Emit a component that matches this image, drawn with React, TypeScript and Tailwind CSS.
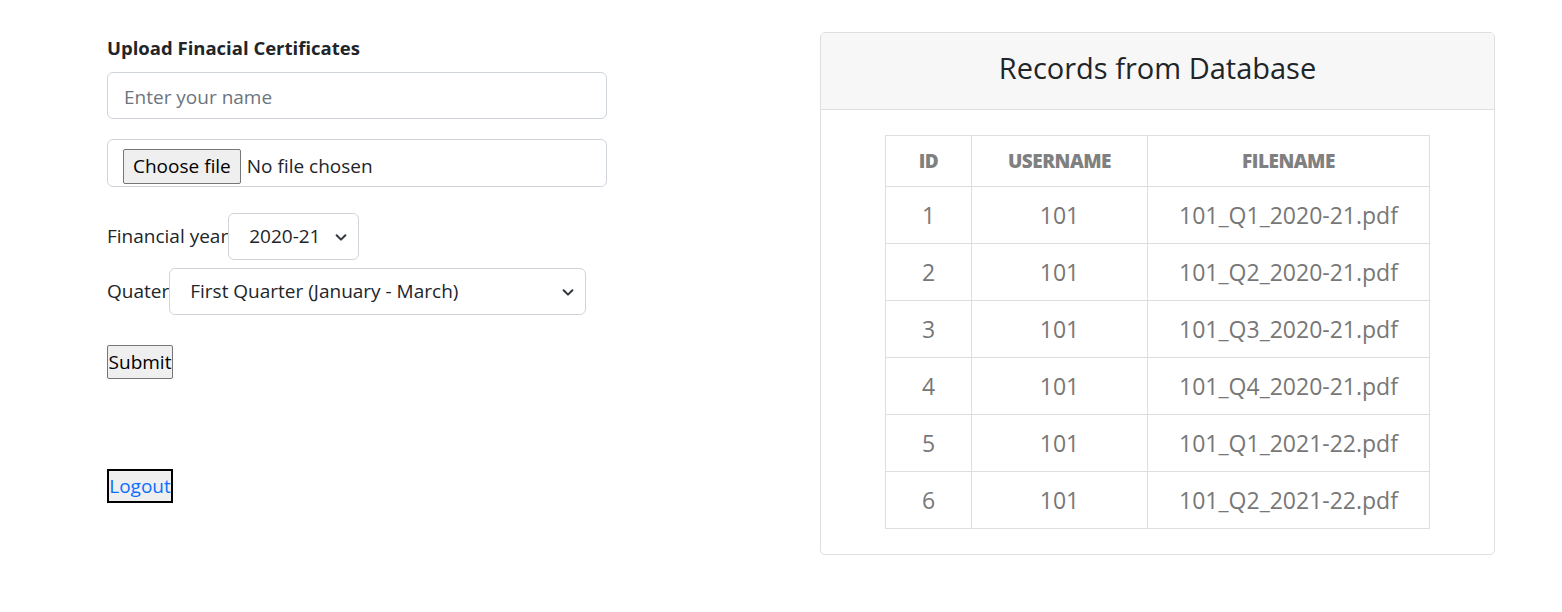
import React from "react";

const records = [
  { id: 1, user: "101", file: "101_Q1_2020-21.pdf" },
  { id: 2, user: "101", file: "101_Q2_2020-21.pdf" },
  { id: 3, user: "101", file: "101_Q3_2020-21.pdf" },
  { id: 4, user: "101", file: "101_Q4_2020-21.pdf" },
  { id: 5, user: "101", file: "101_Q1_2021-22.pdf" },
  { id: 6, user: "101", file: "101_Q2_2021-22.pdf" },
];

function Chevron() {
  return (
    <svg width="14" height="14" viewBox="0 0 16 16" className="shrink-0">
      <path d="M3 6l5 5 5-5" fill="none" stroke="#343a40" strokeWidth="2.4" strokeLinecap="round" strokeLinejoin="round" />
    </svg>
  );
}

function UploadForm() {
  return (
    <div className="w-[820px] shrink-0 pl-[107px] pt-[36px] text-[19px] text-[#212529]">
      <h6 className="text-[18.5px] font-bold leading-6">Upload Finacial Certificates</h6>
      <div className="mt-3 flex h-[47px] w-[500px] items-center rounded-md border border-[#ced4da] px-4 pt-[3px] text-[#6c757d]">
        Enter your name
      </div>
      <div className="mt-5 flex h-[48px] w-[500px] items-center rounded-md border border-[#ced4da] px-[15px] pt-[6px]">
        <span className="flex h-[35px] items-center rounded-[2px] border border-[#767676] bg-[#efefef] px-[9px] text-black">
          Choose file
        </span>
        <span className="ml-[6px] text-[#212529]">No file chosen</span>
      </div>
      <div className="mt-[26px] flex items-center">
        <span>Financial year</span>
        <div className="flex h-[47px] w-[131px] items-center justify-between rounded-md border border-[#ced4da] pl-5 pr-[10px] text-[#212529]">
          <span>2020-21</span>
          <Chevron />
        </div>
      </div>
      <div className="mt-2 flex items-center">
        <span>Quater</span>
        <div className="flex h-[47px] w-[417px] items-center justify-between rounded-md border border-[#ced4da] pl-5 pr-[10px] text-[#212529]">
          <span>First Quarter (January - March)</span>
          <Chevron />
        </div>
      </div>
      <button className="mt-[30px] flex h-[34px] w-[66px] items-center justify-center rounded-[2px] border border-[#767676] bg-[#efefef] text-black">
        Submit
      </button>
      <button className="mt-[90px] flex h-[34px] w-[66px] items-center justify-center border-2 border-black bg-[#efefef] text-[#0d6efd]">
        Logout
      </button>
    </div>
  );
}

function RecordsCard() {
  return (
    <div className="mt-[32px] w-[675px] self-start overflow-hidden rounded-[5px] border border-[#dfdfdf]">
      <div className="flex h-[77px] items-center justify-center border-b border-[#dfdfdf] bg-[#f7f7f7]">
        <h3 className="pb-[6px] text-[29px] font-medium text-[#212529]">Records from Database</h3>
      </div>
      <div className="flex justify-center pt-[25px] pb-[25px]">
        <table className="w-[545px] border-collapse text-center">
          <thead>
            <tr className="h-[51px]">
              <th className="w-[86px] border border-[#dedede] text-[19px] font-extrabold tracking-[-0.5px] text-[#808080]">ID</th>
              <th className="w-[176px] border border-[#dedede] text-[19px] font-extrabold tracking-[-0.5px] text-[#808080]">USERNAME</th>
              <th className="border border-[#dedede] text-[19px] font-extrabold tracking-[-0.5px] text-[#808080]">FILENAME</th>
            </tr>
          </thead>
          <tbody>
            {records.map((r) => (
              <tr key={r.id} className="h-[57px] text-[23px] text-[#777777]">
                <td className="border border-[#dedede]">{r.id}</td>
                <td className="border border-[#dedede]">{r.user}</td>
                <td className="border border-[#dedede]">{r.file}</td>
              </tr>
            ))}
          </tbody>
        </table>
      </div>
    </div>
  );
}

export default function App() {
  return (
    <div className="flex min-h-[612px] bg-white" style={{ fontFamily: '"Open Sans", "Noto Sans", sans-serif' }}>
      <UploadForm />
      <RecordsCard />
    </div>
  );
}
